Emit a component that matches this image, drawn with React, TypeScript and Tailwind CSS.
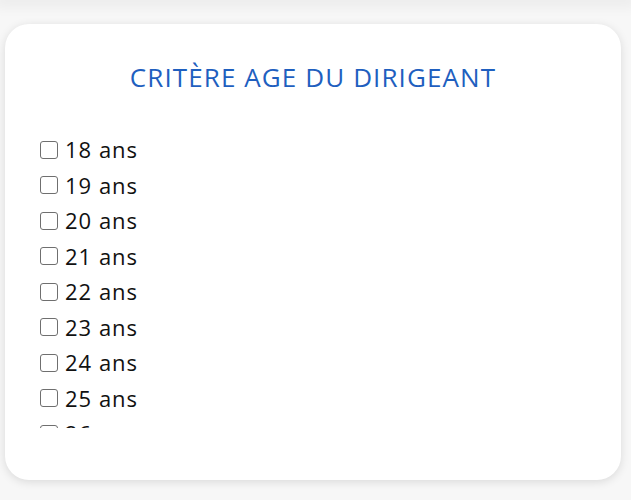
const ages = Array.from({ length: 20 }, (_, i) => 18 + i)

export default function App() {
  return (
    <div className="min-h-[500px] bg-[#f7f7f7] overflow-hidden" style={{ fontFamily: '"Open Sans", sans-serif' }}>
      {/* bottom edge of the previous card */}
      <div className="h-0 shadow-[0_0_14px_6px_rgba(0,0,0,0.06)]" />
      <div className="pt-[24px] pl-[5px] pr-[10px]">
        <div className="rounded-[24px] bg-white shadow-[0_2px_10px_rgba(0,0,0,0.12)] pt-[35px] pb-[52px] pl-[35px]">
          <h2 className="text-center text-[26px] leading-[36px] text-[#1f5fbf] tracking-[1.1px] pr-[35px]">
            CRITÈRE AGE DU DIRIGEANT
          </h2>
          <div className="mt-[37px] h-[296px] overflow-hidden">
            {ages.map((age) => (
              <label key={age} className="flex items-center h-[35.5px] text-[22px] tracking-[1px] text-[#111]">
                <span className="w-[18px] h-[18px] mr-[7px] rounded-[3px] border-[1.5px] border-[#6f6f6f] bg-white" />
                {age} ans
              </label>
            ))}
          </div>
        </div>
      </div>
    </div>
  )
}
